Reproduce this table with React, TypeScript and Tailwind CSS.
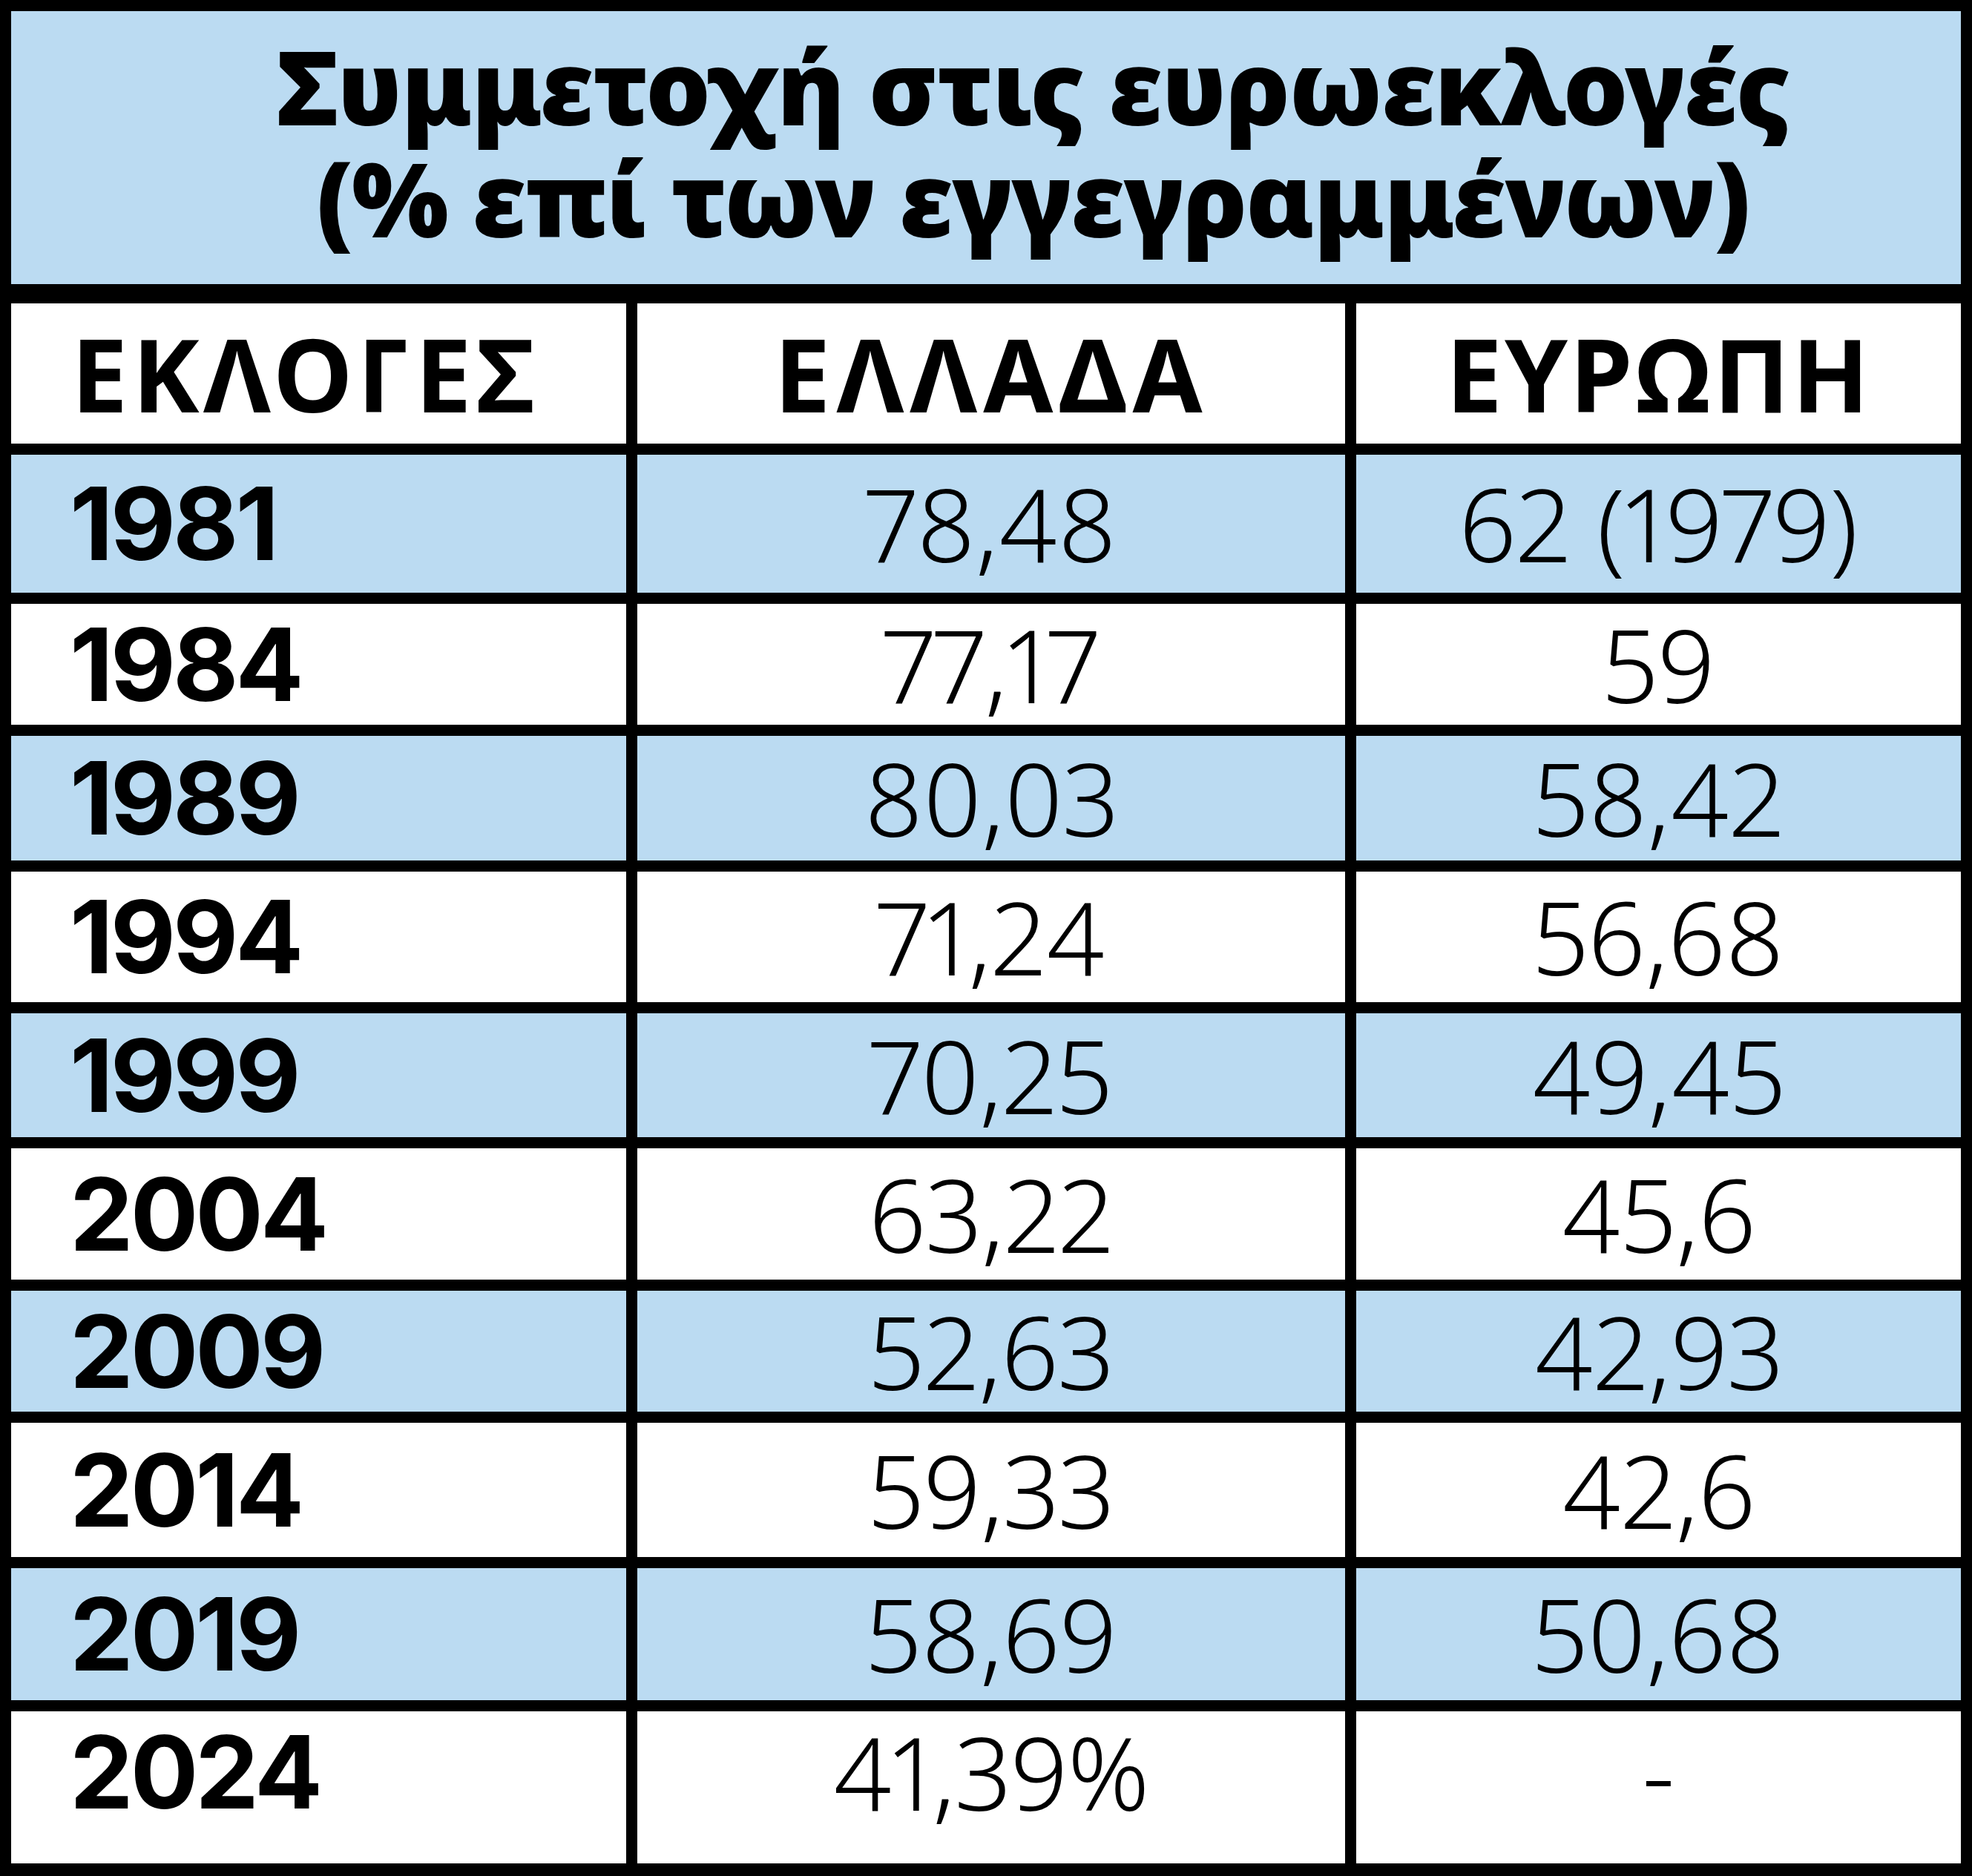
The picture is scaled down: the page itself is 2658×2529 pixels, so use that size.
import React from "react";

const rows: { year: string; gr: string; eu: string; h: string; blue: boolean; last?: boolean }[] = [
  { year: "1981", gr: "78,48", eu: "62 (1979)", h: "h-[186px]", blue: true },
  { year: "1984", gr: "77,17", eu: "59", h: "h-[163px]", blue: false },
  { year: "1989", gr: "80,03", eu: "58,42", h: "h-[168px]", blue: true },
  { year: "1994", gr: "71,24", eu: "56,68", h: "h-[176px]", blue: false },
  { year: "1999", gr: "70,25", eu: "49,45", h: "h-[167px]", blue: true },
  { year: "2004", gr: "63,22", eu: "45,6", h: "h-[177px]", blue: false },
  { year: "2009", gr: "52,63", eu: "42,93", h: "h-[163px]", blue: true },
  { year: "2014", gr: "59,33", eu: "42,6", h: "h-[181px]", blue: false },
  { year: "2019", gr: "58,69", eu: "50,68", h: "h-[178px]", blue: true },
  { year: "2024", gr: "41,39%", eu: "-", h: "h-[205px]", blue: false, last: true },
];

export default function App() {
  return (
    <div className="w-[2658px] h-[2529px] bg-black px-[15px] pt-[15px] pb-[17px] flex flex-col font-['Noto_Sans',sans-serif] text-black">
      <div className="h-[368px] bg-[#bbdbf2] flex items-center justify-center pl-[126px] pb-[16px]">
        <div className="text-center font-black text-[138px] leading-[151px] tracking-[-2px]">
          Συμμετοχή στις ευρωεκλογές
          <br />
          (% επί των εγγεγραμμένων)
        </div>
      </div>
      <div className="mt-[26px] grid grid-cols-[829px_954px_815px] gap-x-[15px] gap-y-[15px]">
        <div className="h-[189px] bg-white flex items-center pl-[81px] font-bold text-[136px] leading-none tracking-[6px]">ΕΚΛΟΓΕΣ</div>
        <div className="h-[189px] bg-white flex items-center justify-center font-bold text-[136px] leading-none tracking-[8px]">ΕΛΛΑΔΑ</div>
        <div className="h-[189px] bg-white flex items-center justify-center font-bold text-[136px] leading-none tracking-[3px]">ΕΥΡΩΠΗ</div>
        {rows.map((r) => {
          const bg = r.blue ? "bg-[#bbdbf2]" : "bg-white";
          const pad = r.last ? "pb-[42px]" : "";
          return (
            <React.Fragment key={r.year}>
              <div className={`${r.h} ${bg} ${pad} flex items-center pl-[79px] font-['Inter',sans-serif] font-bold text-[136px] leading-none tracking-[-4px] proportional-nums`}>{r.year}</div>
              <div className={`${r.h} ${bg} ${pad} flex items-center justify-center font-[350] text-[136px] leading-none proportional-nums`}>{r.gr}</div>
              <div className={`${r.h} ${bg} ${pad} flex items-center justify-center font-[350] text-[136px] leading-none proportional-nums`}>{r.eu}</div>
            </React.Fragment>
          );
        })}
      </div>
    </div>
  );
}
